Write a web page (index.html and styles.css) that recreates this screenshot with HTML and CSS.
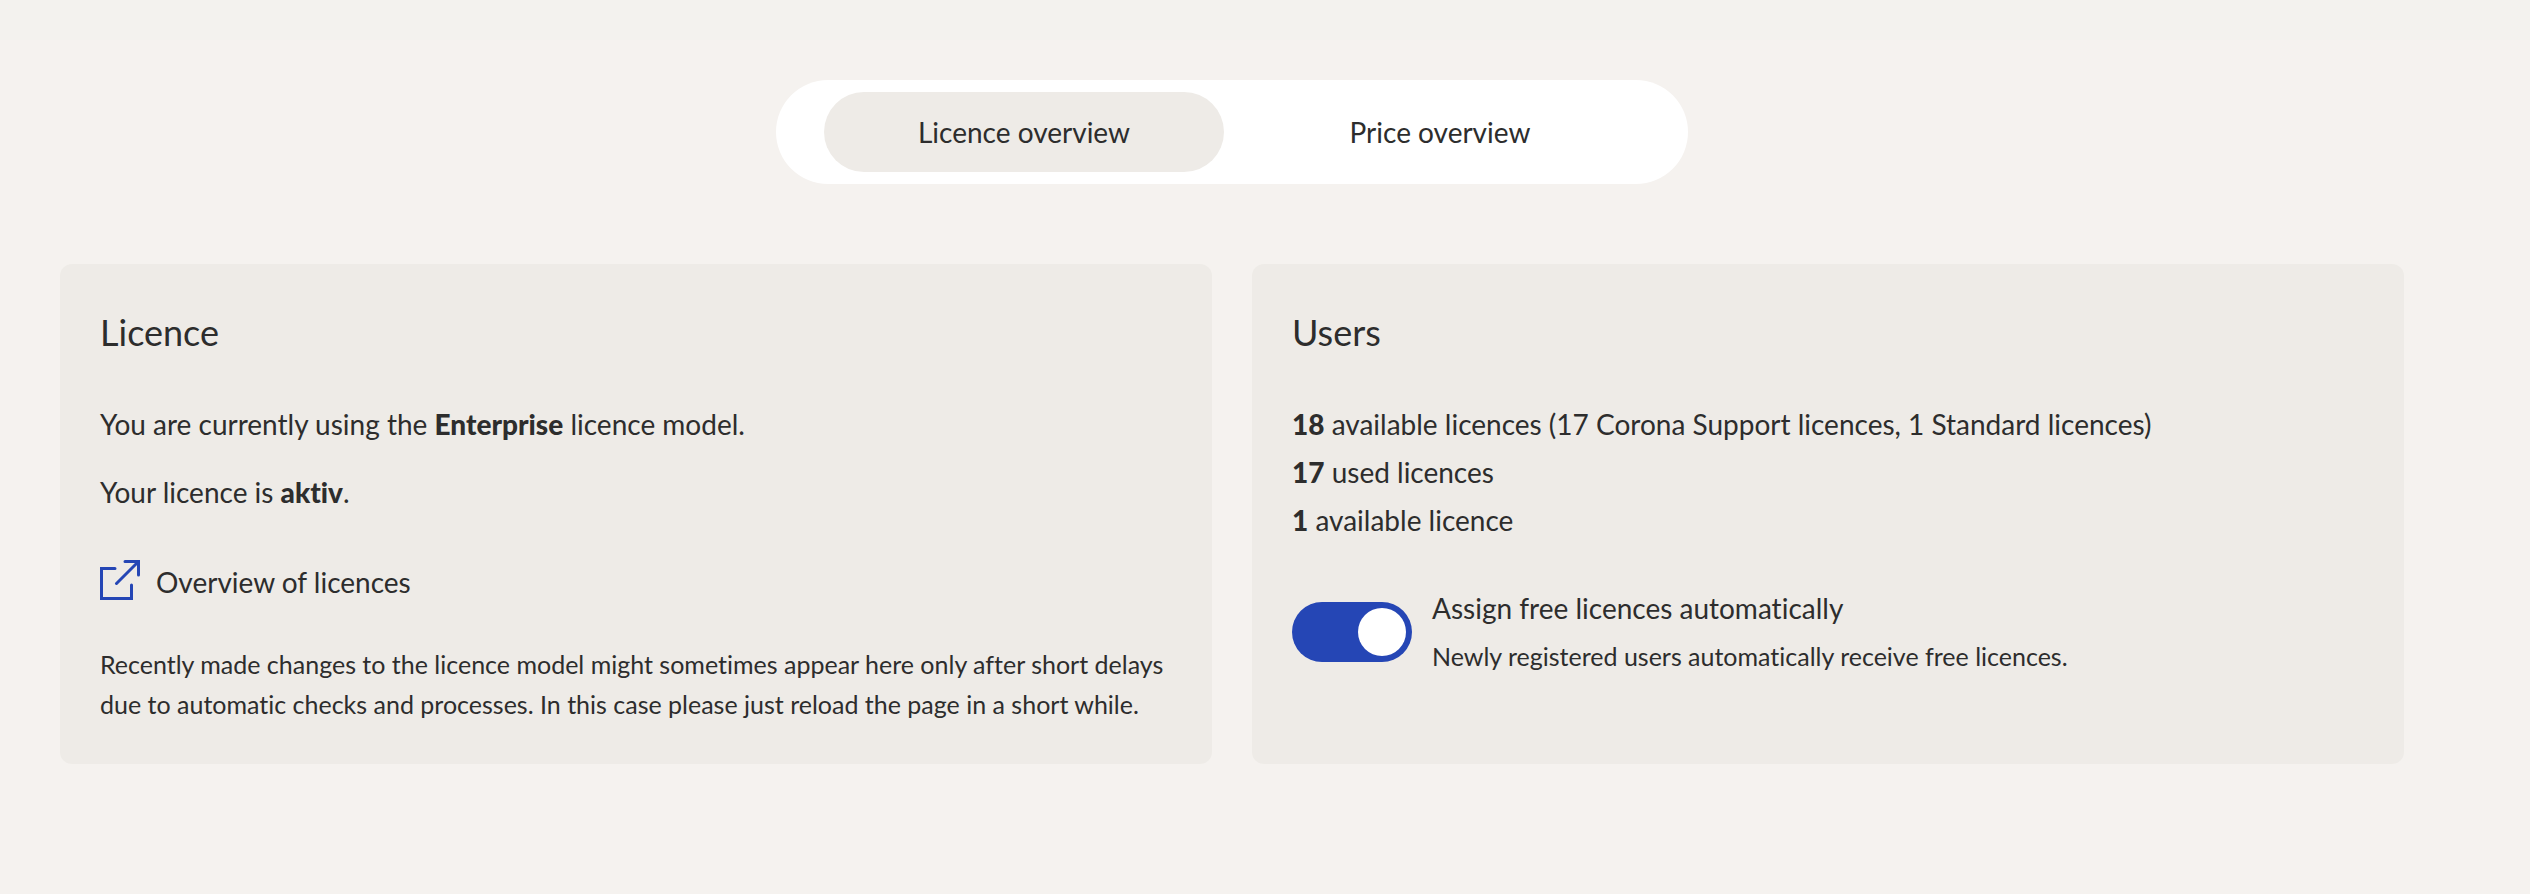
FILE: index.html
```html
<!DOCTYPE html>
<html lang="en">
<head>
<meta charset="utf-8">
<meta name="viewport" content="width=device-width, initial-scale=1">
<title>Licence overview</title>
<link rel="stylesheet" href="styles.css">
</head>
<body>
<div class="top-band"></div>
<main class="page">
  <nav class="tabs" aria-label="Overview">
    <button class="tab tab-active" type="button" aria-pressed="true">Licence overview</button>
    <button class="tab" type="button" aria-pressed="false">Price overview</button>
  </nav>
  <div class="cards">
    <section class="card">
      <h2 class="card-title">Licence</h2>
      <p class="text">You are currently using the <strong>Enterprise</strong> licence model.</p>
      <p class="text text-spaced">Your licence is <strong>aktiv</strong>.</p>
      <a class="link" href="#licences">
        <svg class="link-icon" viewBox="0 0 40 40" fill="none" stroke="currentColor" stroke-width="3" stroke-linecap="round" aria-hidden="true">
          <path d="M15 8.5H1.5V38.5H31.5V25"/>
          <path d="M25 1.5H38.5V15M38 2L16.5 23.5"/>
        </svg>
        <span>Overview of licences</span>
      </a>
      <p class="note">Recently made changes to the licence model might sometimes appear here only after short delays due to automatic checks and processes. In this case please just reload the page in a short while.</p>
    </section>
    <section class="card">
      <h2 class="card-title">Users</h2>
      <p class="text"><strong>18</strong> available licences (17 Corona Support licences, 1 Standard licences)</p>
      <p class="text"><strong>17</strong> used licences</p>
      <p class="text"><strong>1</strong> available licence</p>
      <div class="setting">
        <input class="switch" type="checkbox" role="switch" id="assign" aria-describedby="assign-hint" checked>
        <div>
          <label class="setting-label" for="assign">Assign free licences automatically</label>
          <p class="setting-hint" id="assign-hint">Newly registered users automatically receive free licences.</p>
        </div>
      </div>
    </section>
  </div>
</main>
</body>
</html>
```
FILE: styles.css
```css
* {
  box-sizing: border-box;
}

body {
  margin: 0;
  background: #f5f2ef;
  color: #2d2d2d;
  font-family: Lato, "Liberation Sans", sans-serif;
  font-size: 28px;
  font-variant-ligatures: none;
  line-height: 48px;
}

h2,
p {
  margin: 0;
}

.top-band {
  height: 40px;
  background: #f3f2ee;
}

.page {
  display: flex;
  flex-direction: column;
  gap: 80px;
  padding: 40px 126px 80px 60px;
}

.tabs {
  display: flex;
  gap: 16px;
  align-self: center;
  padding: 12px 48px;
  border-radius: 52px;
  background: #fff;
}

.tab {
  width: 400px;
  height: 80px;
  padding: 0;
  border: 0;
  border-radius: 40px;
  background: transparent;
  color: inherit;
  font: inherit;
  cursor: pointer;
}

.tab-active {
  background: #eeebe7;
}

.cards {
  display: grid;
  grid-template-columns: 1fr 1fr;
  gap: 40px;
}

.card {
  padding: 40px;
  border-radius: 12px;
  background: #eeebe7;
}

.card-title {
  margin-bottom: 40px;
  font-size: 36px;
  font-weight: 400;
  line-height: 56px;
}

.text strong {
  font-weight: 900;
}

.text-spaced {
  margin-top: 20px;
}

.link {
  display: flex;
  align-items: center;
  gap: 16px;
  margin: 42px 0 38px;
  color: inherit;
  text-decoration: none;
}

.link-icon {
  width: 40px;
  height: 40px;
  margin-bottom: 4px;
  color: #2546b5;
}

.note {
  font-size: 25px;
  line-height: 40px;
}

.setting {
  display: flex;
  align-items: center;
  gap: 20px;
  margin-top: 40px;
}

.setting-label {
  display: block;
}

.setting-hint {
  font-size: 25px;
}

.switch {
  appearance: none;
  display: flex;
  flex-shrink: 0;
  align-items: center;
  justify-content: flex-start;
  width: 120px;
  height: 60px;
  margin: 0;
  padding: 6px;
  border-radius: 30px;
  background: #8d8b88;
  cursor: pointer;
}

.switch::before {
  content: "";
  width: 48px;
  height: 48px;
  border-radius: 50%;
  background: #fff;
}

.switch:checked {
  justify-content: flex-end;
  background: #2546b5;
}
```
